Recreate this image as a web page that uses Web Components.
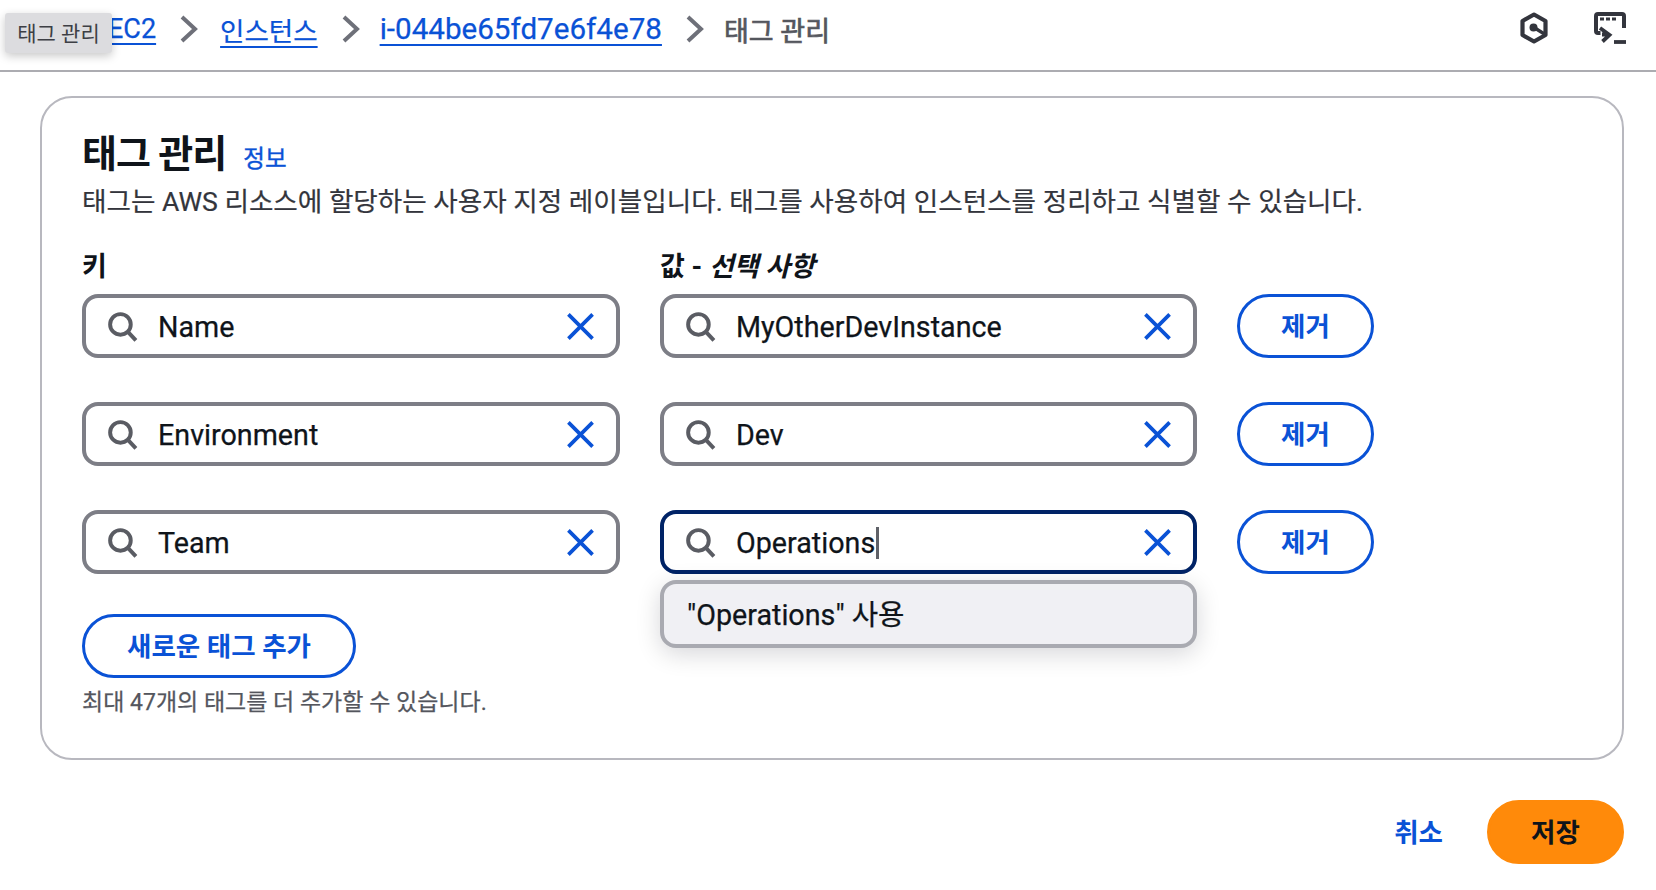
<!DOCTYPE html>
<html lang="ko">
<head>
<meta charset="utf-8">
<title>태그 관리</title>
<style>
  html, body { margin: 0; background: #fff; }
  body {
    width: 1656px; height: 890px; overflow: hidden;
    font-family: Roboto, "Noto Sans CJK KR", sans-serif;
    color: #0f141a;
  }
</style>
</head>
<body>

<top-bar>
  <a slot="crumb" href="#">EC2</a>
  <a slot="crumb" href="#" style="font-size:26.5px">인스턴스</a>
  <a slot="crumb" href="#" style="font-size:29.6px">i-044be65fd7e6f4e78</a>
  <span slot="crumb">태그 관리</span>
</top-bar>

<tag-card>
  <tag-row key-name="Name" value="MyOtherDevInstance"></tag-row>
  <tag-row key-name="Environment" value="Dev"></tag-row>
  <tag-row key-name="Team" value="Operations" active></tag-row>
</tag-card>

<page-actions></page-actions>

<script>
// Icones
const ICON_SEARCH = `<svg viewBox="0 0 32 32" width="33" height="33" fill="none" stroke="#5a5c63" stroke-width="3.8"><circle cx="14" cy="14" r="10"/><path d="M21 21 L29 29.5"/></svg>`;
const ICON_CLEAR = `<svg viewBox="0 0 30 30" width="29" height="29" fill="none" stroke="#0a52d6" stroke-width="3.8"><path d="M2.5 2.5 L27.5 27.5 M27.5 2.5 L2.5 27.5"/></svg>`;
const ICON_CHEVRON = `<svg viewBox="0 0 18 28" width="18" height="28" fill="none" stroke="#6e7079" stroke-width="4"><path d="M2 2 L15 14 L2 26"/></svg>`;

// Boutons : primary / normal / link
class AwsButton extends HTMLElement {
    constructor() {
        super();
        this.attachShadow({ mode: 'open' });
        this.shadowRoot.innerHTML = `
            <style>
                :host {
                    display: inline-flex;
                    align-items: center;
                    justify-content: center;
                    box-sizing: border-box;
                    height: 64px;
                    padding-bottom: 3px;
                    border: 3.5px solid #0a52d6;
                    border-radius: 32px;
                    color: #0a52d6;
                    font-size: 26.5px;
                    font-weight: 700;
                    white-space: nowrap;
                    cursor: pointer;
                }
                :host([variant="primary"]) {
                    background: #ff8a0a;
                    border-color: #ff8a0a;
                    color: #0f141a;
                }
                :host([variant="link"]) {
                    border: 0;
                }
            </style>
            <slot></slot>
        `;
    }
}
customElements.define('aws-button', AwsButton);

// Barre du haut avec le fil d'ariane
class TopBar extends HTMLElement {
    constructor() {
        super();
        this.attachShadow({ mode: 'open' });
        this.shadowRoot.innerHTML = `
            <style>
                :host {
                    display: flex;
                    align-items: center;
                    position: relative;
                    box-sizing: border-box;
                    height: 72px;
                    padding: 0 30px 12px 108px;
                    border-bottom: 2px solid #acacb1;
                }
                .crumbs {
                    display: flex;
                    align-items: center;
                    flex: 1;
                    font-size: 27px;
                    color: #54565d;
                    -webkit-text-stroke: .7px #54565d;
                }
                .sep { display: flex; margin: 0 20px 0 24px; }
                .sep:first-of-type { margin-right: 22px; }
                ::slotted(a) {
                    color: #0a52d6;
                    text-decoration: underline;
                    text-decoration-thickness: 2px;
                    text-underline-offset: 5px;
                    -webkit-text-stroke: .25px #0a52d6;
                }
                .icons { display: flex; align-items: center; gap: 45px; margin-bottom: 2px; }
                .icons svg { display: block; }
                .tip {
                    position: absolute;
                    left: 5px;
                    top: 13px;
                    width: 107px;
                    height: 40px;
                    padding-bottom: 3px;
                    box-sizing: border-box;
                    display: flex;
                    align-items: center;
                    justify-content: center;
                    background: #dcdcdf;
                    border-radius: 3px;
                    box-shadow: 0 3px 10px rgba(0,0,0,.22);
                    color: #3d3f45;
                    font-size: 21px;
                    white-space: nowrap;
                }
            </style>
            <nav class="crumbs"></nav>
            <div class="icons">
                <svg viewBox="0 0 30 32" width="30" height="32" fill="none" stroke="#33353d" stroke-width="4.2" stroke-linejoin="round">
                    <path d="M15 2.5 L26.5 9 V23 L15 29.5 L3.5 23 V9 Z"/>
                    <circle cx="14.5" cy="15.5" r="4" fill="#33353d" stroke="none"/>
                    <path d="M15 15.5 L27 23" stroke-width="3.4"/>
                </svg>
                <svg viewBox="0 0 32 32" width="32" height="32" fill="none" stroke="#33353d">
                    <path d="M6.5 21 H4 Q2 21 2 19 V4 Q2 2 4 2 H28 Q30 2 30 4 V16" stroke-width="4"/>
                    <path d="M6 7 H10 M12 7 H16 M18 7 H22" stroke-width="3.2"/>
                    <path d="M6 16 L15.5 23 L8.5 29.5 M8 22.5 H15" stroke-width="3.8"/>
                    <path d="M20 30 H32" stroke-width="3.8"/>
                </svg>
            </div>
            <div class="tip">태그 관리</div>
        `;
    }

    connectedCallback() {
        // Un séparateur entre chaque élément du fil d'ariane
        const crumbs = this.shadowRoot.querySelector('.crumbs');
        const items = this.querySelectorAll('[slot="crumb"]');
        items.forEach((item, index) => {
            const slotName = `crumb-${index}`;
            item.slot = slotName;
            const slot = document.createElement('slot');
            slot.name = slotName;
            crumbs.appendChild(slot);
            if (index < items.length - 1) {
                const sep = document.createElement('span');
                sep.className = 'sep';
                sep.innerHTML = ICON_CHEVRON;
                crumbs.appendChild(sep);
            }
        });
    }
}
customElements.define('top-bar', TopBar);

// Champ de recherche avec icône et bouton d'effacement
class TagInput extends HTMLElement {
    static get observedAttributes() { return ['value']; }

    constructor() {
        super();
        this.attachShadow({ mode: 'open' });
        this.shadowRoot.innerHTML = `
            <style>
                :host {
                    display: flex;
                    align-items: center;
                    box-sizing: border-box;
                    height: 64px;
                    border: 4px solid #7d7e86;
                    border-radius: 16px;
                    padding: 0 21px 0 20px;
                    background: #fff;
                }
                :host([active]) { border-color: #002366; }
                svg { display: block; flex: none; }
                .text {
                    flex: 1;
                    margin-left: 19px;
                    padding-top: 2px;
                    font-size: 28.7px;
                    color: #0f141a;
                    -webkit-text-stroke: .25px #0f141a;
                    white-space: nowrap;
                    display: flex;
                    align-items: center;
                }
                .caret { display: none; width: 3px; height: 32px; background: #5f6168; margin-left: 1px; }
                :host([active]) .caret { display: block; }
            </style>
            ${ICON_SEARCH}
            <div class="text"><span id="val"></span><span class="caret"></span></div>
            ${ICON_CLEAR}
        `;
    }

    attributeChangedCallback() {
        this.shadowRoot.querySelector('#val').textContent = this.getAttribute('value');
    }
}
customElements.define('tag-input', TagInput);

// Une ligne : clé, valeur, retirer
class TagRow extends HTMLElement {
    constructor() {
        super();
        this.attachShadow({ mode: 'open' });
    }

    connectedCallback() {
        const active = this.hasAttribute('active');
        this.shadowRoot.innerHTML = `
            <style>
                :host {
                    display: grid;
                    grid-template-columns: 538px 537px 137px;
                    column-gap: 40px;
                }
                .value { position: relative; }
                .menu {
                    position: absolute;
                    left: 0;
                    right: 0;
                    top: 70px;
                    box-sizing: border-box;
                    height: 68px;
                    display: flex;
                    align-items: center;
                    padding: 0 23px 4px;
                    background: #f0f0f4;
                    border: 4px solid #a9aab1;
                    border-radius: 16px;
                    box-shadow: 0 6px 24px rgba(0,7,22,.16);
                    font-size: 28.7px;
                    color: #0f141a;
                    -webkit-text-stroke: .25px #0f141a;
                }
            </style>
            <tag-input value="${this.getAttribute('key-name')}"></tag-input>
            <div class="value">
                <tag-input value="${this.getAttribute('value')}" ${active ? 'active' : ''}></tag-input>
                ${active ? `<div class="menu">"${this.getAttribute('value')}" 사용</div>` : ''}
            </div>
            <aws-button>제거</aws-button>
        `;
    }
}
customElements.define('tag-row', TagRow);

// Carte principale
class TagCard extends HTMLElement {
    constructor() {
        super();
        this.attachShadow({ mode: 'open' });
        this.shadowRoot.innerHTML = `
            <style>
                :host {
                    display: block;
                    box-sizing: border-box;
                    width: 1584px;
                    height: 664px;
                    margin: 24px 0 0 40px;
                    padding: 32px 40px 0;
                    border: 2px solid #b8b8bf;
                    border-radius: 32px;
                }
                .title { display: flex; align-items: baseline; gap: 17px; line-height: 48px; }
                h2 { margin: 0; font-size: 38px; font-weight: 700; letter-spacing: -1px; }
                .info { color: #0a52d6; font-size: 23.5px; -webkit-text-stroke: .4px #0a52d6; }
                p { margin: 0; font-size: 26.6px; line-height: 38px; color: #33353c; -webkit-text-stroke: .2px #33353c; }
                .labels {
                    display: grid;
                    grid-template-columns: 538px 537px;
                    column-gap: 40px;
                    margin: 26px 0 7px;
                    font-size: 27px;
                    font-weight: 700;
                    line-height: 40px;
                }
                em { font-style: italic; }
                slot { display: flex; flex-direction: column; gap: 44px; }
                .add { display: flex; width: 274px; margin-top: 40px; }
                .hint { margin-top: 7px; font-size: 23px; line-height: 36px; color: #54565d; -webkit-text-stroke: .25px #54565d; }
            </style>
            <div class="title"><h2>태그 관리</h2><span class="info">정보</span></div>
            <p>태그는 AWS 리소스에 할당하는 사용자 지정 레이블입니다. 태그를 사용하여 인스턴스를 정리하고 식별할 수 있습니다.</p>
            <div class="labels"><span>키</span><span>값 - <em>선택 사항</em></span></div>
            <slot></slot>
            <aws-button class="add">새로운 태그 추가</aws-button>
            <div class="hint">최대 47개의 태그를 더 추가할 수 있습니다.</div>
        `;
    }
}
customElements.define('tag-card', TagCard);

// Actions en bas de page
class PageActions extends HTMLElement {
    constructor() {
        super();
        this.attachShadow({ mode: 'open' });
        this.shadowRoot.innerHTML = `
            <style>
                :host {
                    display: flex;
                    justify-content: flex-end;
                    align-items: center;
                    gap: 44px;
                    width: 1624px;
                    margin-top: 40px;
                }
            </style>
            <aws-button variant="link">취소</aws-button>
            <aws-button variant="primary" style="width:137px">저장</aws-button>
        `;
    }
}
customElements.define('page-actions', PageActions);
</script>
</body>
</html>
